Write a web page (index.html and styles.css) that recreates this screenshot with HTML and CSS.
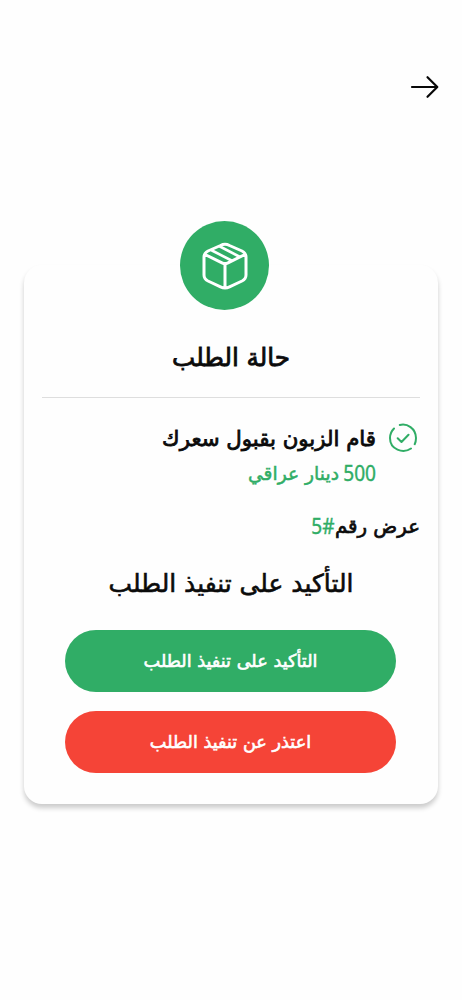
FILE: index.html
```html
<!DOCTYPE html>
<html lang="ar" dir="rtl">
<head>
<meta charset="utf-8">
<title>حالة الطلب</title>
<link rel="stylesheet" href="styles.css">
</head>
<body>
<header class="topbar">
  <svg class="back" viewBox="0 0 30 24" width="30" height="24"><path d="M2 12H27M17.5 2.2L27.3 12L17.5 21.8"/></svg>
</header>
<main class="card">
  <div class="badge">
    <svg class="box" viewBox="0 0 46 48" width="46" height="48"><path d="M18.500 3.500Q23 1 27.500 3.500L40 9Q44 11 44 15V33Q44 37 40 39L27.500 44.800Q23 47 18.500 44.800L6 39Q2 37 2 33V15Q2 11 6 9ZM3 12.500L20 20.800Q23 22.200 26 20.800L43 12.500M23 21.500V45.500"/><path class="tape" d="M10 8.500L29.500 18.500M18 4.500L37 14.500"/></svg>
  </div>
  <h1 class="title"><span>حالة الطلب</span></h1>
  <section class="status">
    <svg class="check" viewBox="0 0 30 30" width="30" height="30"><path d="M11.800 2C19 .2 27.800 5 28 15Q28 18.500 26.700 21.200M23 25.500C15 31 2 26.500 2 15Q2 9.500 6 5.500M9.700 15.200L13.500 19L20.500 11.700"/></svg>
    <div class="lines">
      <p class="message"><span>قام الزبون بقبول سعرك</span></p>
      <p class="price"><bdi class="amount">500</bdi><span class="currency">دينار عراقي</span></p>
    </div>
  </section>
  <p class="offer"><span class="label">عرض رقم</span><bdi class="number" dir="ltr">5#</bdi></p>
  <h2 class="subtitle"><span>التأكيد على تنفيذ الطلب</span></h2>
  <div class="actions">
    <button class="button confirm"><span>التأكيد على تنفيذ الطلب</span></button>
    <button class="button decline"><span>اعتذر عن تنفيذ الطلب</span></button>
  </div>
</main>
</body>
</html>
```
FILE: styles.css
```css
* { box-sizing: border-box; }
body {
  margin: 0;
  min-height: 1000px;
  background: #fefefe;
  color: #0b0b0b;
  font-family: "DejaVu Sans", sans-serif;
}
h1, h2, p { margin: 0; font-weight: 400; white-space: nowrap; }
svg { display: block; fill: none; stroke-linecap: round; stroke-linejoin: round; }
.topbar { height: 265px; padding: 75px 22px 0; }
.back { stroke: #080808; stroke-width: 2.2; }
.card {
  display: flex;
  flex-direction: column;
  width: 414px;
  height: 539px;
  margin: 0 24px;
  padding: 0 18px;
  border-radius: 18px;
  background: #fefefe;
  box-shadow: 0 4px 5px rgba(0, 0, 0, .2);
}
.badge {
  display: flex;
  align-items: center;
  justify-content: center;
  width: 89px;
  height: 89px;
  margin: -44px 151px 1px 0;
  border-radius: 50%;
  background: #30ad66;
}
.box { stroke: #fff; stroke-width: 3; }
.tape { stroke-width: 2.6; }
.title {
  height: 87px;
  padding-top: 29px;
  border-bottom: 1px solid #dedede;
  font: 400 24.600px/36px "DejaVu Sans", sans-serif;
  -webkit-text-stroke: .8px currentColor;
  text-align: center;
}
.status { display: flex; gap: 12px; padding: 25px 2px 0 0; }
.check { stroke: #30ad66; stroke-width: 2; }
.lines { display: flex; flex-direction: column; }
.message { font: 400 21.300px/32px "DejaVu Sans", sans-serif; height: 30px; -webkit-text-stroke: .8px currentColor; }
.price {
  display: flex;
  align-items: center;
  gap: 4px;
  height: 38px;
  padding-top: 2px;
  color: #30ad66;
  font-size: 18.700px;
  -webkit-text-stroke: .5px currentColor;
}
.amount, .number {
  display: inline-block;
  font: 400 21px/30px "Noto Sans", sans-serif;
  -webkit-text-stroke: .4px currentColor;
  transform: scaleX(.91);
  transform-origin: right;
}
.amount { margin-left: -3px; }
.offer { display: flex; align-items: center; height: 30px; margin-top: 20px; }
.label { font-size: 19.800px; -webkit-text-stroke: .7px currentColor; }
.number { color: #30ad66; }
.subtitle { margin-top: 23px; font: 400 24.900px/40px "DejaVu Sans", sans-serif; -webkit-text-stroke: .6px currentColor; text-align: center; }
.actions { display: flex; flex-direction: column; gap: 19px; padding: 0 24px; margin-top: 26px; }
.button {
  width: 331px;
  height: 62px;
  padding: 0;
  border: 0;
  border-radius: 31px;
  color: #fff;
  font: 400 17.700px/62px "DejaVu Sans", sans-serif;
  -webkit-text-stroke: .6px currentColor;
  white-space: nowrap;
}
.confirm { background: #30ad66; }
.decline { background: #f54437; }
```
